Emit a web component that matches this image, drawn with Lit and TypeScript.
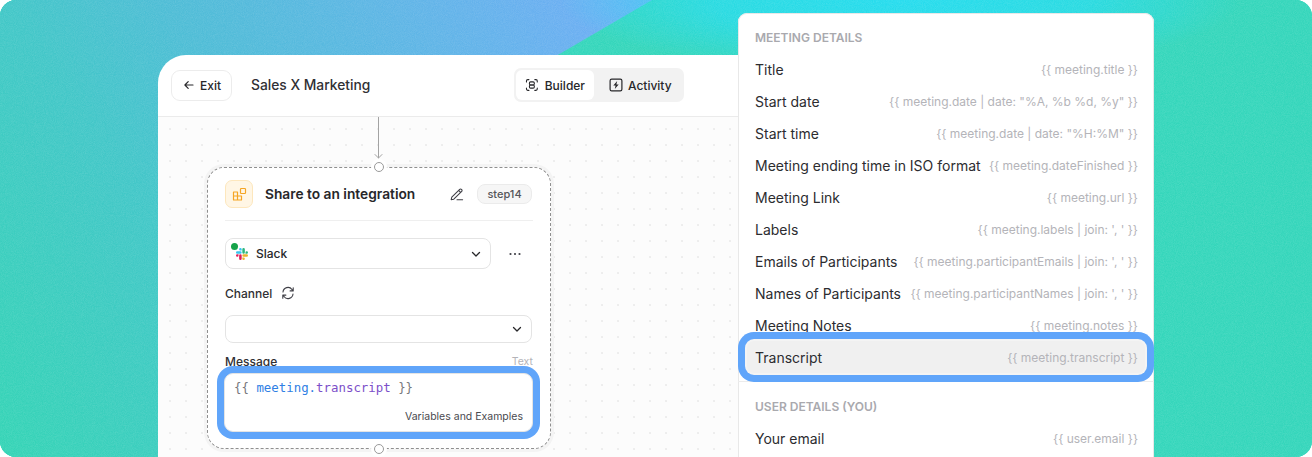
import { LitElement, html, css } from "lit";
import { customElement } from "lit/decorators.js";

const meeting: [string, string][] = [
  ["Title", "{{ meeting.title }}"],
  ["Start date", '{{ meeting.date | date: "%A, %b %d, %y" }}'],
  ["Start time", '{{ meeting.date | date: "%H:%M" }}'],
  ["Meeting ending time in ISO format", "{{ meeting.dateFinished }}"],
  ["Meeting Link", "{{ meeting.url }}"],
  ["Labels", "{{ meeting.labels | join: ', ' }}"],
  ["Emails of Participants", "{{ meeting.participantEmails | join: ', ' }}"],
  ["Names of Participants", "{{ meeting.participantNames | join: ', ' }}"],
  ["Meeting Notes", "{{ meeting.notes }}"],
  ["Transcript", "{{ meeting.transcript }}"],
];

const chevron = html`<svg class="chev" width="12" height="12" viewBox="0 0 12 12" fill="none" stroke="#27272a" stroke-width="1.300" stroke-linecap="round" stroke-linejoin="round"><path d="M2.500 4.500 6 8l3.500-3.500"/></svg>`;

@customElement("app-root")
export class AppRoot extends LitElement {
  static styles = css`
    :host { display: block; width: 1312px; height: 457px; background: #fff; font-family: Inter, "Noto Sans", sans-serif; color: #27272a; }
    .stage { position: relative; width: 1312px; height: 457px; overflow: hidden; border-radius: 16px; background: #34d6bb; display: flex; padding: 55px 0 0 158px; box-sizing: border-box; }
    .bg { position: absolute; inset: 0; }
    .builder { position: relative; z-index: 1; width: 950px; height: 420px; background: #fff; border-radius: 28px 0 0 0; display: flex; flex-direction: column; overflow: hidden; flex: none; }
    .head { height: 62px; box-sizing: border-box; border-bottom: 1px solid #ebebeb; display: flex; align-items: center; padding: 0 0 1px 13px; flex: none; }
    .exit { display: flex; align-items: center; gap: 5px; width: 61px; height: 31px; box-sizing: border-box; padding-left: 11px; border: 1px solid #ececec; border-radius: 9px; font-size: 12px; font-weight: 500; color: #27272a; }
    .title { margin-left: 19px; font-size: 13.8px; font-weight: 500; width: 263px; color: #303034; }
    .toggle { display: flex; align-items: center; width: 170px; height: 34px; box-sizing: border-box; padding: 2px; background: #f2f2f2; border-radius: 7px; font-size: 12px; font-weight: 500; }
    .tab { display: flex; align-items: center; gap: 5px; height: 30px; padding: 0 9px; border-radius: 6px; }
    .tab.on { background: #fff; width: 78px; box-sizing: border-box; margin-right: 6px; gap: 6px; }
    .canvas { position: relative; flex: 1; background-color: #fcfcfc; background-image: radial-gradient(circle, #e6e6e6 0.6px, transparent 0.9px); background-size: 16px 16px; background-position: 4px 4px; padding: 50px 0 0 49px; }
    .wire { position: absolute; left: 216px; top: 0; }
    .card { position: relative; width: 344px; height: 282px; box-sizing: border-box; background: #fff; border: 1px dashed #8f8f8f; border-radius: 17px; box-shadow: 0 0 0 3px #f4f4f4; padding: 12px 17px 0; }
    .node { position: absolute; left: 166px; width: 10px; height: 10px; box-sizing: border-box; border: 1px solid #9a9a9a; background: #fff; border-radius: 50%; box-shadow: 0 0 0 3px #fff; }
    .node.t { top: -6px; }
    .node.b { bottom: -6px; }
    .chead { display: flex; align-items: center; height: 28px; padding-bottom: 12px; border-bottom: 1px solid #efefef; }
    .ic { width: 28px; height: 28px; box-sizing: border-box; border-radius: 7px; background: #fff6e5; border: 1px solid #fde7bd; display: flex; align-items: center; justify-content: center; flex: none; }
    .ctitle { margin-left: 12px; font-size: 13.75px; font-weight: 600; width: 185px; color: #27272a; }
    .pill { margin-left: 13px; width: 55px; height: 20px; box-sizing: border-box; border: 1px solid #ebebeb; background: #f6f6f6; border-radius: 8px; font-size: 11px; font-weight: 500; color: #55555a; display: flex; align-items: center; justify-content: center; }
    .selrow { display: flex; align-items: center; margin-top: 17px; }
    .sel { position: relative; height: 31px; box-sizing: border-box; border: 1px solid #e4e4e4; border-radius: 8px; display: flex; align-items: center; justify-content: space-between; padding: 0 8px 0 10px; background: #fff; }
    .sel.a { width: 266px; font-size: 12px; font-weight: 500; }
    .sel.b { width: 307px; height: 28px; margin-top: 13px; justify-content: flex-end; padding-right: 8px; }
    .slack { display: flex; align-items: center; gap: 8px; }
    .dot { position: absolute; left: 5px; top: 4px; width: 7px; height: 7px; border-radius: 50%; background: #16a34a; }
    .more { margin-left: 18px; }
    .label { font-size: 12px; font-weight: 500; color: #303034; }
    .chan { display: flex; align-items: center; gap: 9px; margin-top: 15px; height: 18px; }
    .msg { display: flex; justify-content: space-between; margin-top: 11px; height: 15px; line-height: 15px; }
    .ty { font-size: 10.5px; color: #b3b3b8; }
    .area { position: relative; z-index: 1; margin: 4px -1px 0; width: 309px; height: 59px; box-sizing: border-box; background: #fff; border: 1px solid #e4e4e4; border-radius: 9px; box-shadow: 0 0 0 7px #60a5fa; padding: 5px 9px 8px; display: flex; flex-direction: column; justify-content: space-between; }
    .code { font-family: "DejaVu Sans Mono", monospace; font-size: 12.4px; line-height: 18px; color: #77777c; white-space: pre; }
    .code .b { color: #2f80e4; }
    .code .p { color: #7c4fc9; }
    .hint { align-self: flex-end; font-size: 10.5px; color: #4a4a4f; }
    .menu { position: absolute; z-index: 2; left: 738px; top: 13px; width: 416px; height: 470px; box-sizing: border-box; background: #fff; border-radius: 9px; padding: 18px 9px 0; box-shadow: inset 0 0 0 1px #e8e8e8; }
    .sec { font-size: 12px; font-weight: 600; color: #a9a9ae; padding-left: 8px; height: 14px; line-height: 14px; }
    .rows { margin-top: 8px; }
    .row { display: flex; align-items: center; justify-content: space-between; height: 32px; padding: 0 7px 0 8px; font-size: 14px; color: #2c2c30; white-space: nowrap; }
    .row span { font-size: 12px; color: #b4b4b9; }
    .row.hl { position: relative; z-index: 1; background: #f0f0f0; border-radius: 7px; box-shadow: 0 0 0 2px #f4f4f4, 0 0 0 9px #60a5fa; }
    .rule { height: 1px; background: #ececec; margin: 8px -9px 0; }
    .sec.u { margin-top: 18px; }
    .rows.u { margin-top: 8px; }
  `;

  render() {
    return html`
      <div class="stage">
        <svg class="bg" width="1312" height="457" viewBox="0 0 1312 457" aria-hidden="true">
          <defs>
            <linearGradient id="g" x1="-20" y1="470" x2="640" y2="0" gradientUnits="userSpaceOnUse">
              <stop offset="0" stop-color="#33d6b4"/>
              <stop offset=".36" stop-color="#42c7c8"/>
              <stop offset=".52" stop-color="#4ebdd6"/>
              <stop offset="1" stop-color="#70acf7"/>
            </linearGradient>
            <radialGradient id="c" cx="900" cy="0" r="340" gradientUnits="userSpaceOnUse" gradientTransform="scale(1 .22)">
              <stop offset="0" stop-color="#26dcee"/>
              <stop offset=".55" stop-color="#26dcee" stop-opacity=".75"/>
              <stop offset="1" stop-color="#26dcee" stop-opacity="0"/>
            </radialGradient>
            <filter id="n" x="0" y="0" width="100%" height="100%">
              <feTurbulence type="fractalNoise" baseFrequency="1.100" numOctaves="2" seed="4"/>
              <feColorMatrix values="0 0 0 0 1  0 0 0 0 1  0 0 0 0 1  0 0 0 .5 -.12"/>
            </filter>
          </defs>
          <rect width="1312" height="457" fill="#34d6bb"/>
          <polygon points="0,0 652,0 556,56 420,457 0,457" fill="url(#g)"/>
          <rect x="560" y="0" width="700" height="90" fill="url(#c)"/>
          <rect width="1312" height="457" filter="url(#n)" opacity=".35"/>
        </svg>
        <section class="builder">
          <header class="head">
            <div class="exit">
              <svg width="12" height="12" viewBox="0 0 12 12" fill="none" stroke="#27272a" stroke-width="1.200" stroke-linecap="round" stroke-linejoin="round"><path d="M10 6H2M5.200 2.600 1.900 6l3.300 3.400"/></svg>
              Exit
            </div>
            <div class="title">Sales X Marketing</div>
            <div class="toggle">
              <div class="tab on">
                <svg width="14" height="14" viewBox="0 0 14 14" fill="none" stroke="#27272a" stroke-width="1.100" stroke-linecap="round" stroke-linejoin="round"><path d="M1.500 4V2.800c0-.7.600-1.300 1.300-1.300H4M10 1.500h1.200c.7 0 1.300.6 1.300 1.300V4M12.500 10v1.200c0 .7-.6 1.300-1.300 1.300H10M4 12.500H2.800c-.7 0-1.300-.6-1.300-1.300V10"/><rect x="4.500" y="3.800" width="5" height="3.200" rx="1.200"/><rect x="4.500" y="7" width="5" height="3.200" rx="1.200"/></svg>
                Builder
              </div>
              <div class="tab">
                <svg width="14" height="14" viewBox="0 0 14 14" fill="none" stroke="#27272a" stroke-width="1.200" stroke-linejoin="round"><rect x="1.100" y="1.100" width="11.800" height="11.800" rx="1.600"/><path d="M8.200 3 4.300 7.600h2.300l-.8 3.400 3.900-4.600H7.400z" fill="#27272a" stroke="none"/></svg>
                Activity
              </div>
            </div>
          </header>
          <div class="canvas">
            <svg class="wire" width="9" height="42" viewBox="0 0 9 42" fill="none" stroke="#a3a3a3" stroke-linecap="round" stroke-linejoin="round"><path d="M4.500 0V41M1 37.500l3.500 3.500L8 37.500"/></svg>
            <article class="card">
              <i class="node t"></i>
              <div class="chead">
                <div class="ic">
                  <svg width="16" height="16" viewBox="0 0 16 16" fill="none" stroke="#f5a524" stroke-width="1.200" stroke-linejoin="round"><path d="M2.500 6h4v4h-4zM2.500 10h4v4h-4zM6.500 10h4v4h-4z"/><rect x="9.500" y="2.500" width="5" height="5" rx=".8"/></svg>
                </div>
                <div class="ctitle">Share to an integration</div>
                <svg width="14" height="14" viewBox="0 0 14 14" fill="none" stroke="#3f3f46" stroke-width="1.100" stroke-linecap="round" stroke-linejoin="round"><path d="M1.800 10.200 9.700 2.300a1.200 1.200 0 0 1 1.700 0l.3.300a1.200 1.200 0 0 1 0 1.700L3.800 12.200l-2.600.4zM8.600 3.400l2 2M7 12.800h5.600"/></svg>
                <div class="pill">step14</div>
              </div>
              <div class="selrow">
                <div class="sel a">
                  <div class="slack">
                    <svg width="12" height="12" viewBox="0 0 24 24">
                      <path fill="#e01e5a" d="M5.042 15.165a2.528 2.528 0 0 1-2.520 2.523A2.528 2.528 0 0 1 0 15.165a2.527 2.527 0 0 1 2.522-2.520h2.520v2.520zM6.313 15.165a2.527 2.527 0 0 1 2.521-2.520 2.527 2.527 0 0 1 2.521 2.520v6.313A2.528 2.528 0 0 1 8.834 24a2.528 2.528 0 0 1-2.521-2.522v-6.313z"/>
                      <path fill="#36c5f0" d="M8.834 5.042a2.528 2.528 0 0 1-2.521-2.520A2.528 2.528 0 0 1 8.834 0a2.528 2.528 0 0 1 2.521 2.522v2.520H8.834zM8.834 6.313a2.528 2.528 0 0 1 2.521 2.521 2.528 2.528 0 0 1-2.521 2.521H2.522A2.528 2.528 0 0 1 0 8.834a2.528 2.528 0 0 1 2.522-2.521h6.312z"/>
                      <path fill="#2eb67d" d="M18.956 8.834a2.528 2.528 0 0 1 2.522-2.521A2.528 2.528 0 0 1 24 8.834a2.528 2.528 0 0 1-2.522 2.521h-2.522V8.834zM17.688 8.834a2.528 2.528 0 0 1-2.523 2.521 2.527 2.527 0 0 1-2.520-2.521V2.522A2.527 2.527 0 0 1 15.165 0a2.528 2.528 0 0 1 2.523 2.522v6.312z"/>
                      <path fill="#ecb22e" d="M15.165 18.956a2.528 2.528 0 0 1 2.523 2.522A2.528 2.528 0 0 1 15.165 24a2.527 2.527 0 0 1-2.520-2.522v-2.522h2.520zM15.165 17.688a2.527 2.527 0 0 1-2.520-2.523 2.526 2.526 0 0 1 2.520-2.520h6.313A2.527 2.527 0 0 1 24 15.165a2.528 2.528 0 0 1-2.522 2.523h-6.313z"/>
                    </svg>
                    Slack
                  </div>
                  <i class="dot"></i>
                  ${chevron}
                </div>
                <svg class="more" width="12" height="12" viewBox="0 0 12 12" fill="#3f3f46"><circle cx="1.500" cy="6" r="1.100"/><circle cx="6" cy="6" r="1.100"/><circle cx="10.500" cy="6" r="1.100"/></svg>
              </div>
              <div class="chan label">
                Channel
                <svg width="14" height="14" viewBox="0 0 14 14" fill="none" stroke="#3f3f46" stroke-width="1.100" stroke-linecap="round" stroke-linejoin="round"><path d="M2 6A5 5 0 0 1 11 3.500l1 1.300M12.200 1.800v3.100H9.100M12 8A5 5 0 0 1 3 10.500L2 9.200M1.800 12.200V9.100h3.100"/></svg>
              </div>
              <div class="sel b">${chevron}</div>
              <div class="msg"><span class="label">Message</span><span class="ty">Text</span></div>
              <div class="area">
                <div class="code">{{ <span class="b">meeting.</span><span class="p">transcript</span> }}</div>
                <div class="hint">Variables and Examples</div>
              </div>
              <i class="node b"></i>
            </article>
          </div>
        </section>
        <aside class="menu">
          <div class="sec">MEETING DETAILS</div>
          <div class="rows">
            ${meeting.map(([a, b]) => html`<div class="row ${a === "Transcript" ? "hl" : ""}">${a}<span>${b}</span></div>`)}
          </div>
          <div class="rule"></div>
          <div class="sec u">USER DETAILS (YOU)</div>
          <div class="rows u"><div class="row">Your email<span>{{ user.email }}</span></div></div>
        </aside>
      </div>
    `;
  }
}
